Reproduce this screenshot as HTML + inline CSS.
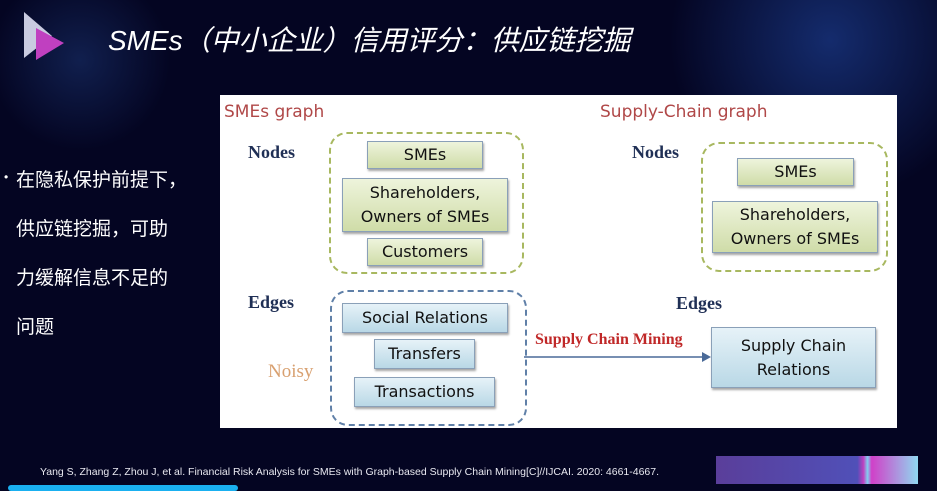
<!DOCTYPE html>
<html><head><meta charset="utf-8"><style>
body{margin:0;width:937px;height:489px;overflow:hidden;background:#040522;font-family:"Liberation Sans","Noto Sans CJK SC",sans-serif;position:relative}
.a{position:absolute}
.bx{position:absolute;border:1px solid #8aa0b8;box-shadow:1px 2px 2px rgba(0,0,0,.35);font-family:"DejaVu Sans","Liberation Sans",sans-serif;font-size:16px;color:#111;text-align:center;display:flex;align-items:center;justify-content:center;line-height:24px}
.g{background:linear-gradient(#eef4dc,#cfdca8)}
.b{background:linear-gradient(#e6f2f8,#b9d8e6)}
.ser{font-family:"Liberation Serif",serif;font-weight:bold;font-size:18px;color:#1f2f55}
</style></head><body>
<div class="a" style="left:0;top:0;width:937px;height:489px;background:radial-gradient(circle at 80px 60px,rgba(40,80,160,.35),transparent 90px),radial-gradient(circle at 830px 40px,rgba(40,90,200,.45),transparent 160px)"></div>
<svg class="a" style="left:22px;top:10px" width="50" height="52"><polygon points="2,2 30,26 2,48" fill="#c9cbe0"/><polygon points="14,18 42,33 14,50" fill="#c040c0"/></svg>
<div class="a" style="left:108px;top:19px;color:#fff;font-size:28px;font-style:italic;letter-spacing:0px">SMEs（中小企业）信用评分：供应链挖掘</div>
<div class="a" style="left:4px;top:170px;color:#fff;font-size:12px">•</div>
<div class="a" style="left:16px;top:156px;color:#fff;font-size:19px;line-height:49px">在隐私保护前提下，<br>供应链挖掘，可助<br>力缓解信息不足的<br>问题</div>
<div class="a" style="left:220px;top:95px;width:677px;height:333px;background:#fff;"></div>
<div class="a" style="left:224px;top:102px;color:#b04848;font-size:17px;font-family:'DejaVu Sans',sans-serif">SMEs graph</div>
<div class="a" style="left:600px;top:102px;color:#b04848;font-size:17px;font-family:'DejaVu Sans',sans-serif">Supply-Chain graph</div>
<div class="a ser" style="left:248px;top:142px">Nodes</div>
<div class="a ser" style="left:248px;top:292px">Edges</div>
<div class="a ser" style="left:632px;top:142px">Nodes</div>
<div class="a ser" style="left:676px;top:293px">Edges</div>
<div class="a" style="left:268px;top:361px;font-family:'Liberation Serif',serif;font-size:19px;color:#d8a070">Noisy</div>
<div class="a" style="left:329px;top:132px;width:191px;height:138px;border:2px dashed #a8b860;border-radius:18px"></div>
<div class="a" style="left:330px;top:290px;width:193px;height:132px;border:2px dashed #6080a8;border-radius:18px"></div>
<div class="a" style="left:701px;top:142px;width:183px;height:126px;border:2px dashed #a8b860;border-radius:18px"></div>
<div class="bx g" style="left:367px;top:141px;width:114px;height:26px">SMEs</div>
<div class="bx g" style="left:342px;top:178px;width:164px;height:52px">Shareholders,<br>Owners of SMEs</div>
<div class="bx g" style="left:367px;top:238px;width:114px;height:26px">Customers</div>
<div class="bx b" style="left:342px;top:303px;width:164px;height:28px">Social Relations</div>
<div class="bx b" style="left:374px;top:339px;width:99px;height:28px">Transfers</div>
<div class="bx b" style="left:354px;top:377px;width:139px;height:28px">Transactions</div>
<div class="bx g" style="left:737px;top:158px;width:115px;height:26px">SMEs</div>
<div class="bx g" style="left:712px;top:201px;width:164px;height:50px">Shareholders,<br>Owners of SMEs</div>
<div class="bx b" style="left:711px;top:327px;width:163px;height:59px">Supply Chain<br>Relations</div>
<svg class="a" style="left:524px;top:350px" width="190" height="14"><line x1="0" y1="7" x2="180" y2="7" stroke="#4a6a98" stroke-width="1.5"/><polygon points="178,2 187,7 178,12" fill="#4a6a98"/></svg>
<div class="a" style="left:535px;top:331px;font-family:'Liberation Serif',serif;font-weight:bold;font-size:16px;color:#c02828">Supply Chain Mining</div>
<div class="a" style="left:40px;top:466px;color:#e8e8f0;font-size:10.5px">Yang S, Zhang Z, Zhou J, et al. Financial Risk Analysis for SMEs with Graph-based Supply Chain Mining[C]//IJCAI. 2020: 4661-4667.</div>
<div class="a" style="left:716px;top:456px;width:202px;height:28px;background:linear-gradient(90deg,#5a3e9a,#5050b8 70%,#c040c0 73%,#80d0f0 75%,#d040c8 77%,#90d8f0)"></div>
<div class="a" style="left:8px;top:485px;width:230px;height:6px;background:#1ab0f0;border-radius:3px"></div>
</body></html>
